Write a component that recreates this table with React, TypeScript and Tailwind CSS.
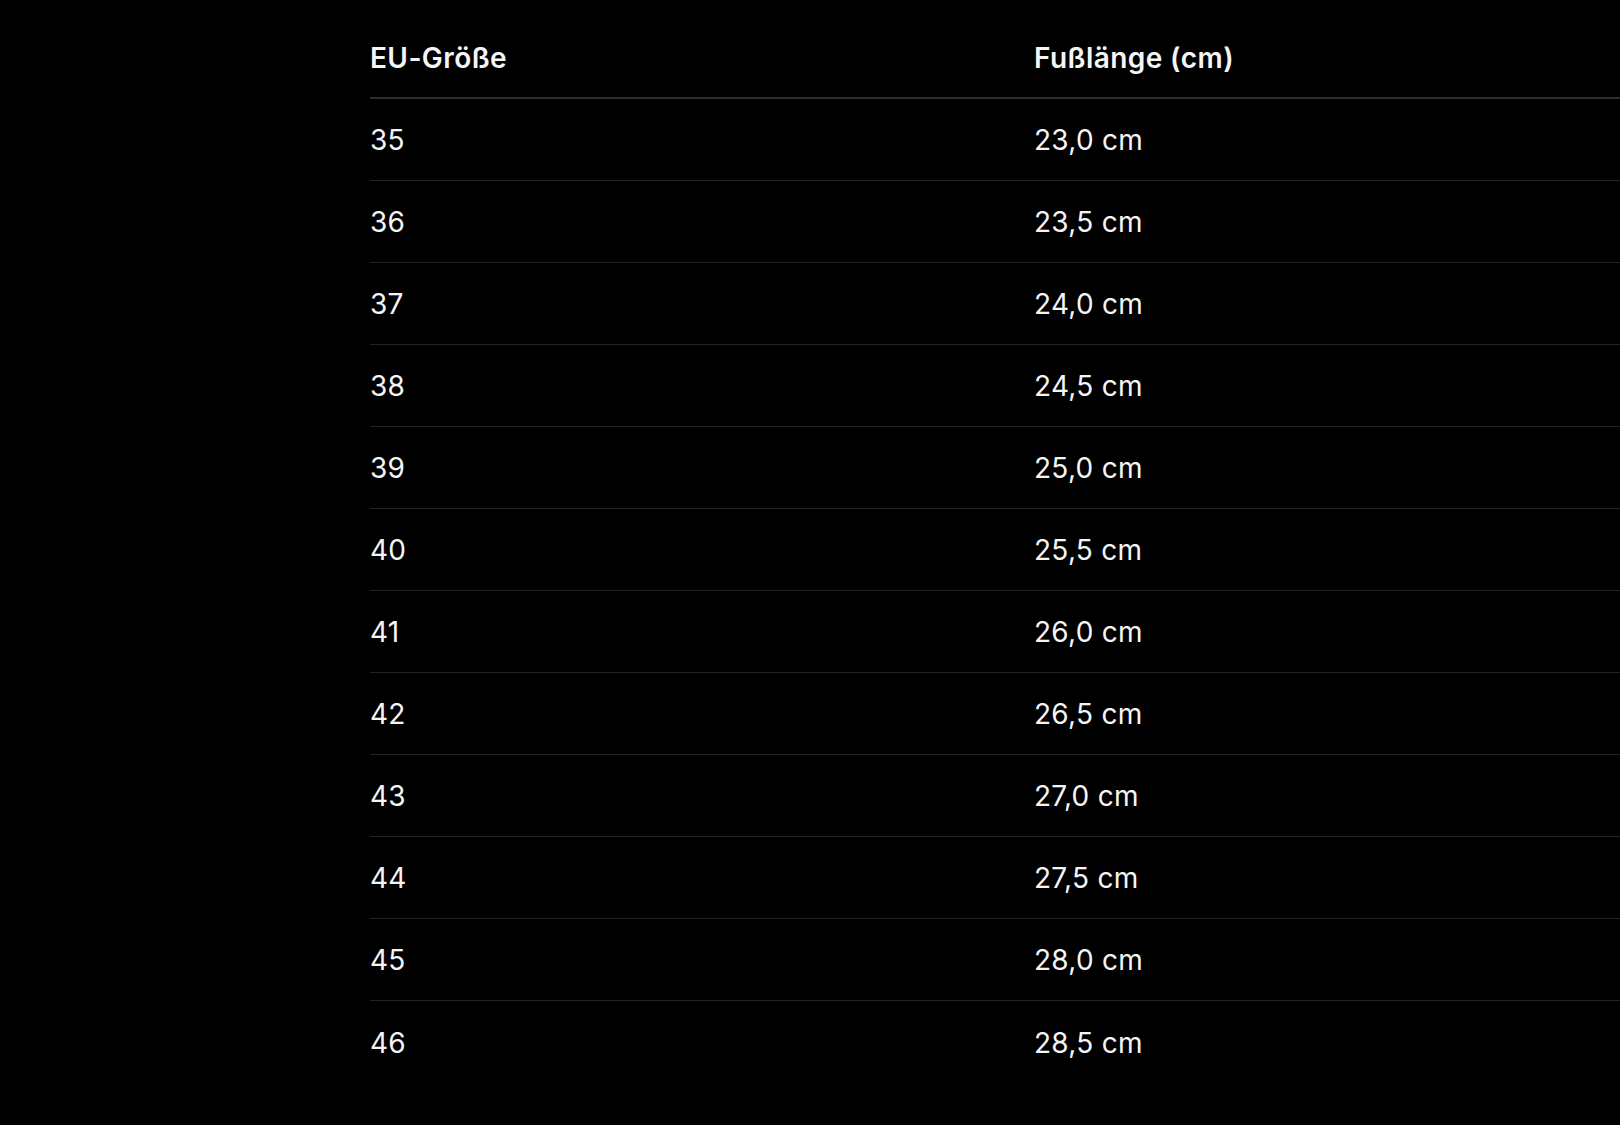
const rows: [string, string][] = [
  ['35', '23,0 cm'],
  ['36', '23,5 cm'],
  ['37', '24,0 cm'],
  ['38', '24,5 cm'],
  ['39', '25,0 cm'],
  ['40', '25,5 cm'],
  ['41', '26,0 cm'],
  ['42', '26,5 cm'],
  ['43', '27,0 cm'],
  ['44', '27,5 cm'],
  ['45', '28,0 cm'],
  ['46', '28,5 cm'],
]

export default function App() {
  return (
    <div
      className="min-h-[1125px] w-full overflow-hidden bg-black pl-[370px] pt-[17px] text-[#f5f5f7]"
      style={{ fontFamily: 'Inter, "Noto Sans", sans-serif' }}
    >
      <div className="grid h-[82px] grid-cols-[664px_1fr] items-center border-b-2 border-[#2e2e30] pt-[1px] text-[28px] font-semibold tracking-[0.015em]">
        <div>EU-Größe</div>
        <div>Fußlänge (cm)</div>
      </div>
      {rows.map(([size, len], i) => (
        <div
          key={size}
          className={`grid h-[82px] grid-cols-[664px_1fr] items-center pt-[1px] text-[28px] font-normal tracking-[0.01em] ${
            i < rows.length - 1 ? 'border-b border-[#232325]' : ''
          }`}
        >
          <div>{size}</div>
          <div>{len}</div>
        </div>
      ))}
    </div>
  )
}
